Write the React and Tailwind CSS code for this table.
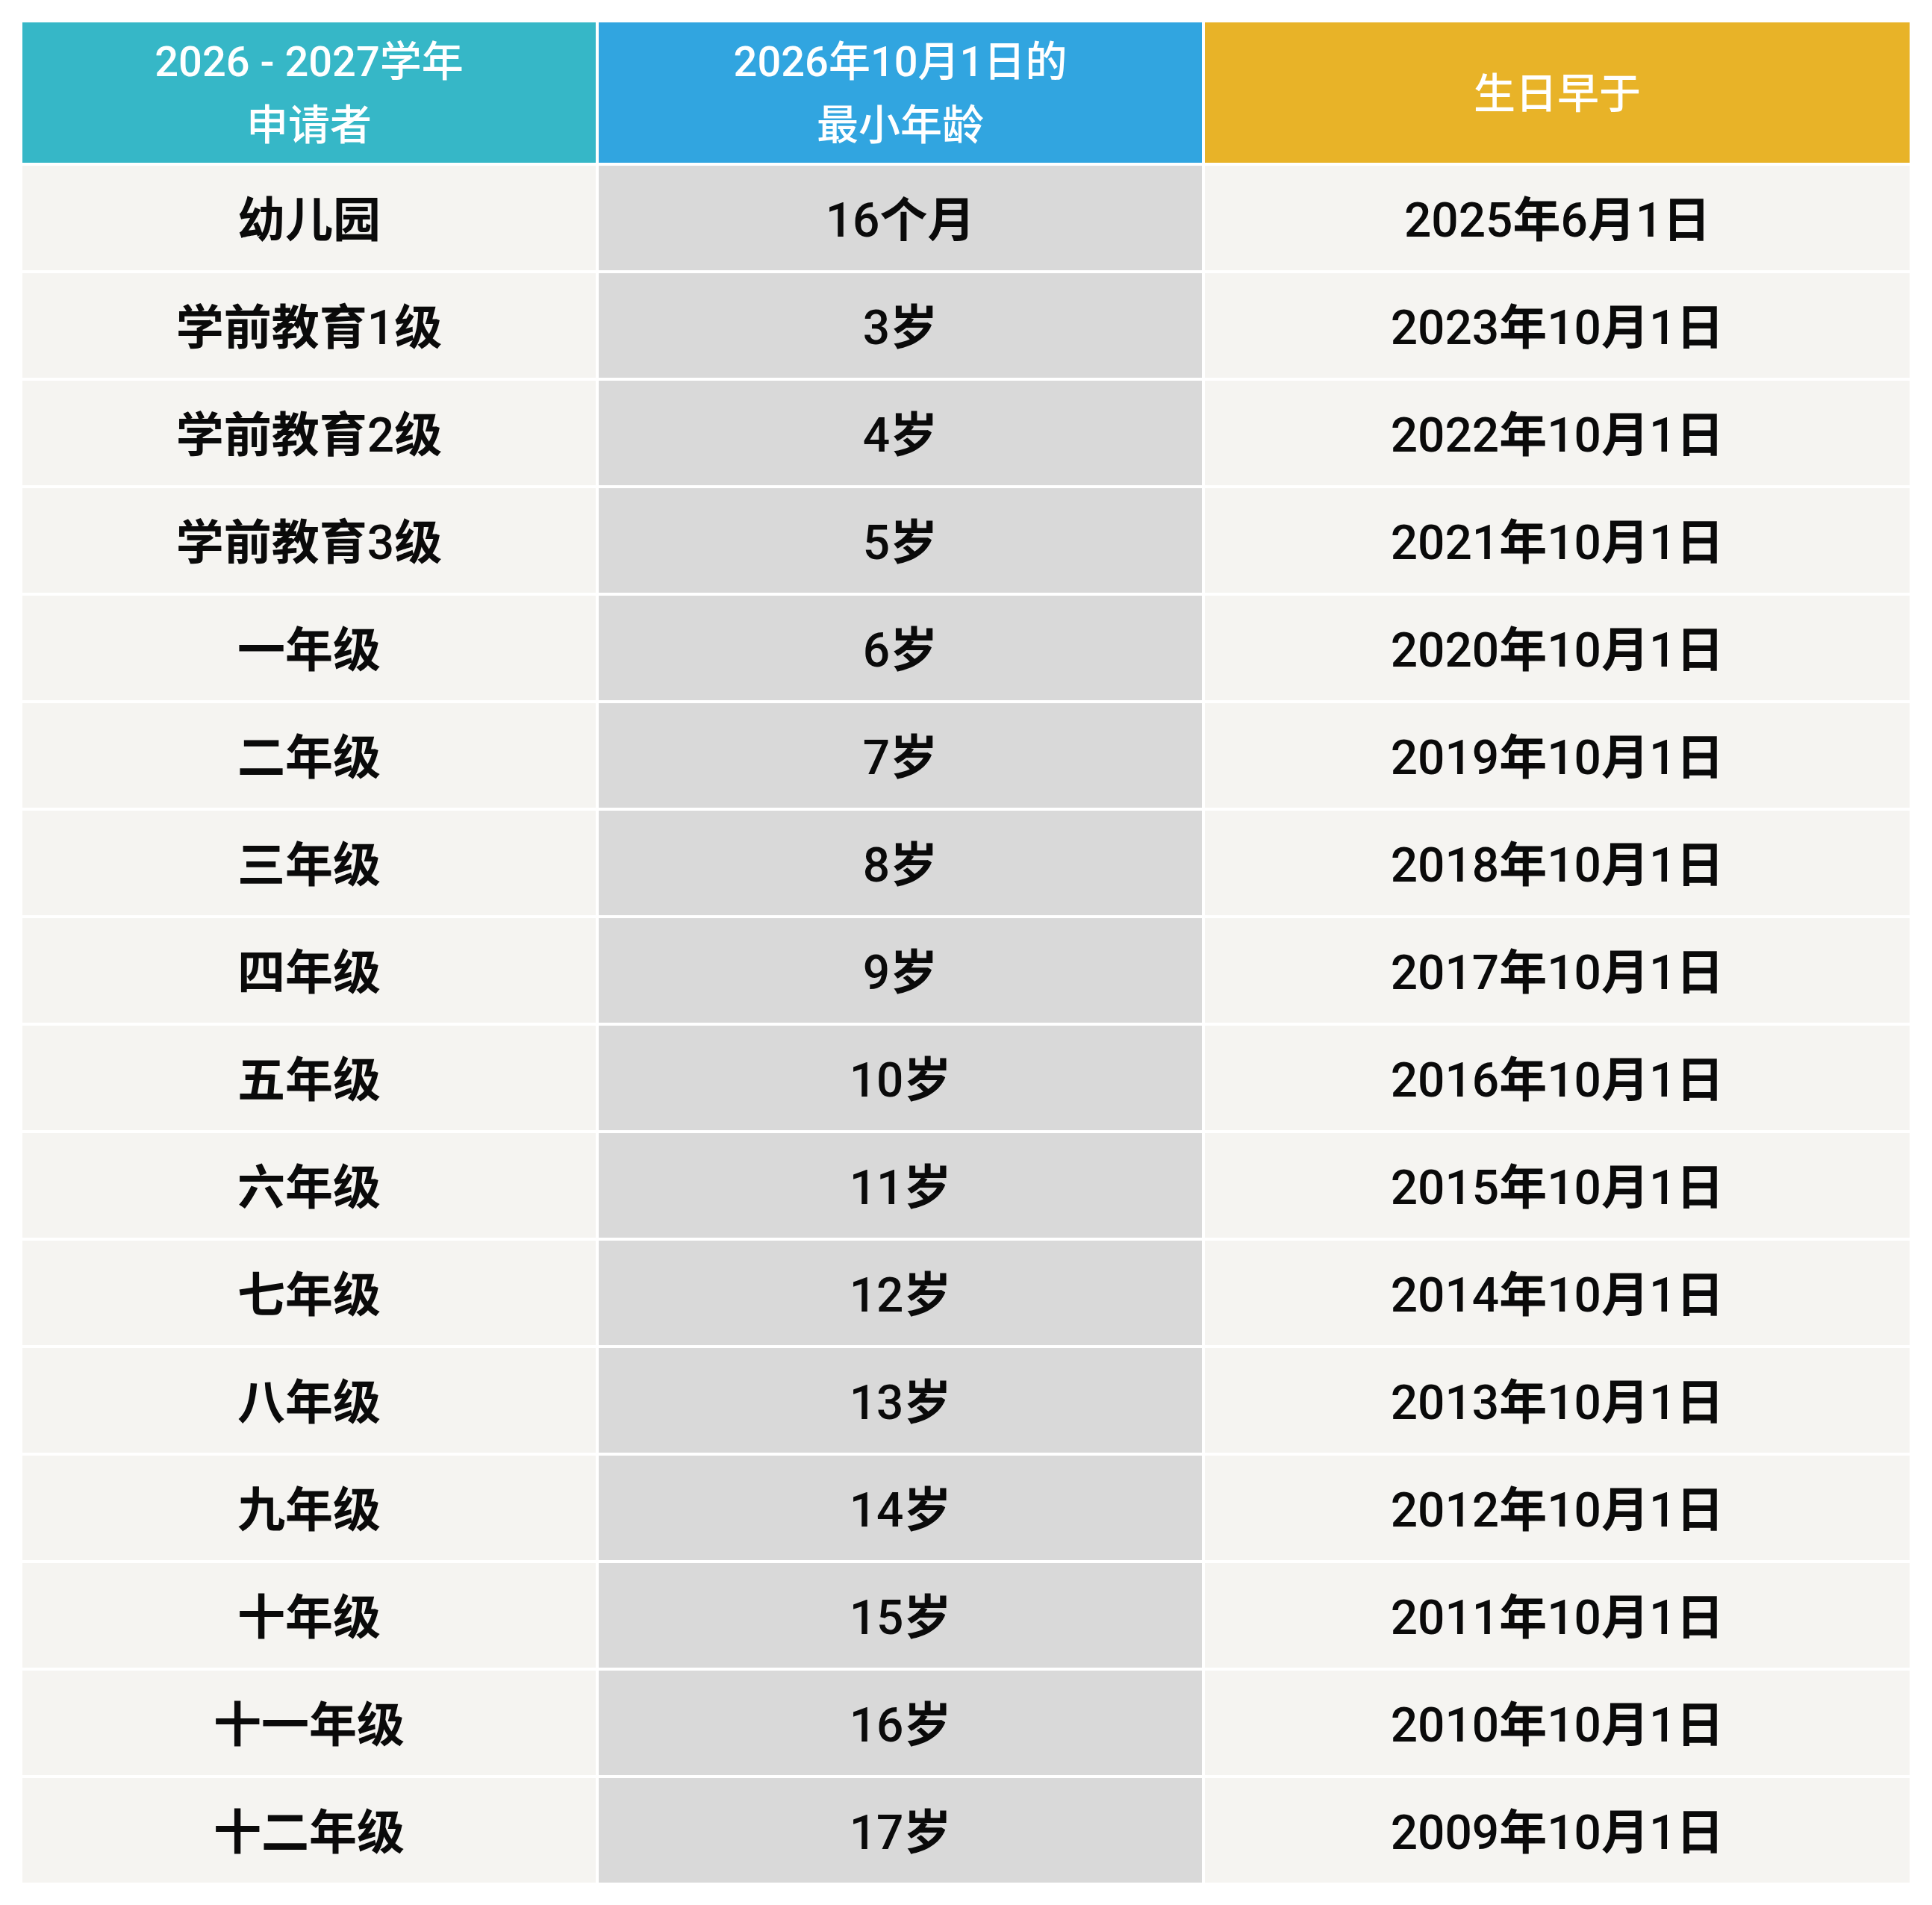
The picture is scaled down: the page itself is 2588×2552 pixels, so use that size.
import React from "react";

const rows = [
  ["幼儿园", "16个月", "2025年6月1日"],
  ["学前教育1级", "3岁", "2023年10月1日"],
  ["学前教育2级", "4岁", "2022年10月1日"],
  ["学前教育3级", "5岁", "2021年10月1日"],
  ["一年级", "6岁", "2020年10月1日"],
  ["二年级", "7岁", "2019年10月1日"],
  ["三年级", "8岁", "2018年10月1日"],
  ["四年级", "9岁", "2017年10月1日"],
  ["五年级", "10岁", "2016年10月1日"],
  ["六年级", "11岁", "2015年10月1日"],
  ["七年级", "12岁", "2014年10月1日"],
  ["八年级", "13岁", "2013年10月1日"],
  ["九年级", "14岁", "2012年10月1日"],
  ["十年级", "15岁", "2011年10月1日"],
  ["十一年级", "16岁", "2010年10月1日"],
  ["十二年级", "17岁", "2009年10月1日"],
];

function Mixed({ text }) {
  const parts = text.split(/(\d+)/);
  return (
    <span>
      {parts.map((p, i) =>
        /^\d+$/.test(p) ? (
          <span key={i} className="font-['Roboto','Liberation_Sans',sans-serif] font-medium">
            {p}
          </span>
        ) : (
          <span key={i} className="font-['Noto_Sans_CJK_SC',sans-serif] font-bold">
            {p}
          </span>
        )
      )}
    </span>
  );
}

export default function App() {
  return (
    <div className="w-[2588px] h-[2552px] bg-white pt-[30px] pl-[30px] font-['Roboto','Noto_Sans_CJK_SC',sans-serif]">
      <div className="flex flex-col gap-[4px] w-[2528px]">
        <div className="grid grid-cols-[768px_808px_944px] gap-x-[4px] h-[188px] text-white text-[56px] leading-[85px] text-center font-medium">
          <div className="bg-[#36b7c7] flex flex-col items-center justify-center pt-[4px]">
            <div>2026 - 2027学年</div>
            <div>申请者</div>
          </div>
          <div className="bg-[#31a5e0] flex flex-col items-center justify-center pt-[4px]">
            <div>2026年10月1日的</div>
            <div>最小年龄</div>
          </div>
          <div className="bg-[#e8b328] flex items-center justify-center pt-[4px]">
            <div>生日早于</div>
          </div>
        </div>
        {rows.map((r, i) => (
          <div
            key={i}
            className="grid grid-cols-[768px_808px_944px] gap-x-[4px] h-[140px] text-[64px] text-[#0a0a0a] text-center"
          >
            <div className="bg-[#f5f4f1] flex items-center justify-center pt-[1px]"><Mixed text={r[0]} /></div>
            <div className="bg-[#d9d9d9] flex items-center justify-center pt-[1px]"><Mixed text={r[1]} /></div>
            <div className="bg-[#f5f4f1] flex items-center justify-center pt-[1px]"><Mixed text={r[2]} /></div>
          </div>
        ))}
      </div>
    </div>
  );
}
